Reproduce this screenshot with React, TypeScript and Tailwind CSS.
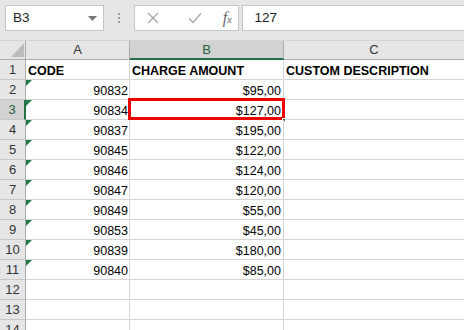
import React from "react";

const rows: { n: number; a?: string; b?: string; c?: string; bold?: boolean; tri?: boolean }[] = [
  { n: 1, a: "CODE", b: "CHARGE AMOUNT", c: "CUSTOM DESCRIPTION", bold: true },
  { n: 2, a: "90832", b: "$95,00", tri: true },
  { n: 3, a: "90834", b: "$127,00", tri: true },
  { n: 4, a: "90837", b: "$195,00", tri: true },
  { n: 5, a: "90845", b: "$122,00", tri: true },
  { n: 6, a: "90846", b: "$124,00", tri: true },
  { n: 7, a: "90847", b: "$120,00", tri: true },
  { n: 8, a: "90849", b: "$55,00", tri: true },
  { n: 9, a: "90853", b: "$45,00", tri: true },
  { n: 10, a: "90839", b: "$180,00", tri: true },
  { n: 11, a: "90840", b: "$85,00", tri: true },
  { n: 12 },
  { n: 13 },
  { n: 14 },
];

export default function App() {
  return (
    <div
      className="w-[464px] h-[330px] overflow-hidden bg-white text-[12.5px] text-[#000]"
      style={{ fontFamily: '"Liberation Sans", Arial, sans-serif' }}
    >
      {/* Formula bar */}
      <div className="h-[40px] bg-[#e6e6e6] flex items-start pt-[5px]">
        <div className="ml-[5px] w-[102px] h-[26px] bg-white border border-[#c6c6c6] flex items-center justify-between pl-[7px] pr-[6px]">
          <span className="text-[13.5px] text-[#222]">B3</span>
          <svg width="9" height="5" viewBox="0 0 9 5">
            <polygon points="0,0 9,0 4.5,5" fill="#777" />
          </svg>
        </div>
        <div className="ml-[14px] mt-[8px] flex flex-col gap-[2px]">
          <div className="w-[2px] h-[2px] bg-[#9e9e9e]" />
          <div className="w-[2px] h-[2px] bg-[#9e9e9e]" />
          <div className="w-[2px] h-[2px] bg-[#9e9e9e]" />
        </div>
        <div className="ml-[14px] w-[110px] h-[26px] bg-white border border-[#c6c6c6] flex items-center">
          <svg className="ml-[12px]" width="12" height="12" viewBox="0 0 12 12">
            <path d="M1 1 L11 11 M11 1 L1 11" stroke="#a8a8a8" strokeWidth="1.3" fill="none" />
          </svg>
          <svg className="ml-[29px]" width="14" height="12" viewBox="0 0 14 12">
            <path d="M1 6.5 L5 10.5 L13 1.5" stroke="#a8a8a8" strokeWidth="1.4" fill="none" />
          </svg>
          <span
            className="ml-[21px] italic text-[16px] text-[#6a6a6a] leading-none"
            style={{ fontFamily: '"Liberation Serif", "Times New Roman", serif' }}
          >
            f<span className="text-[11px]">x</span>
          </span>
        </div>
        <div className="ml-[3px] w-[230px] h-[26px] bg-white border border-[#c6c6c6] border-r-0 flex items-center pl-[11px]">
          <span className="text-[13.5px] text-[#222]">127</span>
        </div>
      </div>

      {/* Column headers */}
      <div className="flex h-[20px] bg-[#e6e6e6] border-t border-[#d4d4d4]">
        <div className="w-[26px] h-full border-r border-b border-[#ababab] relative">
          <svg className="absolute left-[11px] top-[2px]" width="13" height="14" viewBox="0 0 13 14">
            <polygon points="13,0 13,14 0,14" fill="#bcbcbc" />
          </svg>
        </div>
        <div className="w-[104px] h-full border-r border-b border-[#ababab] flex items-center justify-center text-[#333] text-[13px]">
          A
        </div>
        <div className="w-[154px] h-full bg-[#d2d2d2] border-r border-[#ababab] border-b-2 border-b-[#217346] flex items-center justify-center text-[#1e5e3b] text-[13px]">
          B
        </div>
        <div className="flex-1 h-full border-b border-[#ababab] flex items-center justify-center text-[#333] text-[13px]">
          C
        </div>
      </div>

      {/* Rows */}
      {rows.map((r) => {
        const sel = r.n === 3;
        return (
          <div key={r.n} className="flex h-[20px]">
            <div
              className={
                sel
                  ? "w-[26px] h-full bg-[#d2d2d2] border-b border-[#c8c8c8] border-r-2 border-r-[#217346] flex items-end justify-center pb-[1px] text-[13px] leading-none text-[#1e5e3b]"
                  : "w-[26px] h-full bg-[#e6e6e6] border-b border-[#c8c8c8] border-r border-r-[#ababab] flex items-end justify-center pb-[1px] text-[13px] leading-none text-[#333]"
              }
            >
              <span className="mb-[2px]">{r.n}</span>
            </div>
            <div
              className={
                "relative w-[104px] h-full border-b border-r border-[#d4d4d4] flex items-end pb-[2px] leading-none " +
                (r.bold ? "justify-start pl-[2px] font-bold" : "justify-end pr-[1px]")
              }
            >
              {r.tri && (
                <div className="absolute left-0 top-0 w-0 h-0 border-t-[6px] border-t-[#1e7b45] border-r-[6px] border-r-transparent" />
              )}
              {r.a}
            </div>
            <div
              className={
                "relative w-[154px] h-full border-b border-r border-[#d4d4d4] flex items-end pb-[2px] leading-none " +
                (r.bold ? "justify-start pl-[2px] font-bold" : "justify-end pr-[2px]")
              }
            >
              {r.b}
              {sel && (
                <>
                  <div className="absolute -left-[2px] -top-[2px] -right-[2px] -bottom-[1px] border-[3px] border-[#ee0000]" />
                  <div className="absolute -right-[3px] -bottom-[3px] w-[4px] h-[4px] bg-[#217346] border border-white" />
                </>
              )}
            </div>
            <div
              className={
                "flex-1 h-full border-b border-[#d4d4d4] flex items-end pb-[2px] leading-none " +
                (r.bold ? "pl-[2px] font-bold" : "")
              }
            >
              {r.c}
            </div>
          </div>
        );
      })}
    </div>
  );
}
